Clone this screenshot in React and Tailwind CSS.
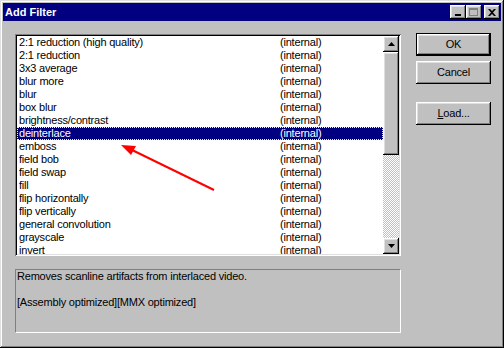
import React from "react"

const raised =
  "shadow-[inset_-1px_-1px_#000,inset_1px_1px_#fff,inset_-2px_-2px_#808080,inset_2px_2px_#dfdfdf]"

const filters = [
  "2:1 reduction (high quality)",
  "2:1 reduction",
  "3x3 average",
  "blur more",
  "blur",
  "box blur",
  "brightness/contrast",
  "deinterlace",
  "emboss",
  "field bob",
  "field swap",
  "fill",
  "flip horizontally",
  "flip vertically",
  "general convolution",
  "grayscale",
  "invert",
]

function TitleButton({ children, className = "" }) {
  return (
    <div className={`w-[16px] h-[14px] bg-[#c0c0c0] flex items-center justify-center ${raised} ${className}`}>
      {children}
    </div>
  )
}

function Arrow({ up }) {
  return (
    <svg width="7" height="4" viewBox="0 0 7 4">
      {up ? <path d="M3.5 0 L7 4 L0 4 Z" fill="#000" /> : <path d="M0 0 L7 0 L3.5 4 Z" fill="#000" />}
    </svg>
  )
}

function Button({ children, isDefault }) {
  if (isDefault) {
    return (
      <div className="h-[23px] border border-black">
        <div className={`h-full bg-[#c0c0c0] flex items-center justify-center ${raised}`}>{children}</div>
      </div>
    )
  }
  return <div className={`h-[23px] bg-[#c0c0c0] flex items-center justify-center ${raised}`}>{children}</div>
}

export default function App() {
  return (
    <div
      className="relative w-[504px] h-[348px] bg-[#c0c0c0] p-[3px] flex flex-col text-[11px] text-black shadow-[inset_-1px_-1px_#000,inset_1px_1px_#dfdfdf,inset_-2px_-2px_#808080,inset_2px_2px_#fff]"
      style={{ fontFamily: "'Liberation Sans', Arial, sans-serif" }}
    >
      <div className="h-[18px] bg-[#000080] flex items-center justify-between pl-[2px] pr-[1px]">
        <span className="text-white font-bold text-[11px] leading-none">Add Filter</span>
        <div className="flex items-center">
          <TitleButton>
            <div className="w-[6px] h-[2px] bg-black mt-[6px] -ml-[1px]" />
          </TitleButton>
          <TitleButton>
            <div className="w-[9px] h-[8px] border border-[#808080] border-t-2 -mt-px -ml-px" />
          </TitleButton>
          <TitleButton className="ml-[2px]">
            <svg width="8" height="7" viewBox="0 0 8 7" className="-ml-px">
              <path d="M0 0 L2 0 L4 2 L6 0 L8 0 L5 3.5 L8 7 L6 7 L4 5 L2 7 L0 7 L3 3.5 Z" fill="#000" />
            </svg>
          </TitleButton>
        </div>
      </div>

      <div className="flex pl-[12px] pr-[10px] pt-[13px] gap-[15px] tracking-[-0.2px]">
        <div className="w-[386px] flex flex-col">
          <div className="h-[222px] p-[2px] bg-white flex shadow-[inset_1px_1px_#808080,inset_-1px_-1px_#fff,inset_2px_2px_#000,inset_-2px_-2px_#dfdfdf]">
            <div className="flex-1 overflow-hidden">
              {filters.map((f) => {
                const sel = f === "deinterlace"
                return (
                  <div
                    key={f}
                    className={`h-[13px] leading-[13px] flex pl-[2px] ${
                      sel ? "bg-[#000080] text-white outline-1 outline-dotted outline-[#ffff80] -outline-offset-1" : ""
                    }`}
                  >
                    <span className="w-[261px] whitespace-nowrap">{f}</span>
                    <span>(internal)</span>
                  </div>
                )
              })}
            </div>
            <div className="w-[16px] flex flex-col">
              <div className={`h-[16px] bg-[#c0c0c0] flex items-center justify-center ${raised}`}>
                <Arrow up />
              </div>
              <div className={`h-[103px] bg-[#c0c0c0] ${raised}`} />
              <div className="flex-1 bg-[repeating-conic-gradient(#c0c0c0_0_25%,#fff_0_50%)] bg-size-[2px_2px]" />
              <div className={`h-[16px] bg-[#c0c0c0] flex items-center justify-center ${raised}`}>
                <Arrow />
              </div>
            </div>
          </div>
          <div className="mt-[13px] h-[64px] border border-t-[#808080] border-l-[#808080] border-b-white border-r-white pl-px leading-[13px]">
            <div>Removes scanline artifacts from interlaced video.</div>
            <div className="h-[13px]" />
            <div>[Assembly optimized][MMX optimized]</div>
          </div>
        </div>

        <div className="w-[75px] flex flex-col -mt-px">
          <Button isDefault>OK</Button>
          <div className="mt-[5px]">
            <Button>Cancel</Button>
          </div>
          <div className="mt-[18px]">
            <Button>
              <span>
                <span className="underline">L</span>oad...
              </span>
            </Button>
          </div>
        </div>
      </div>

      <svg className="absolute left-0 top-0 pointer-events-none" width="504" height="348">
        <line x1="214" y1="190" x2="130" y2="149" stroke="#ff0000" strokeWidth="2" />
        <path d="M121 145 L136 146 L131 155 Z" fill="#ff0000" />
      </svg>
    </div>
  )
}
